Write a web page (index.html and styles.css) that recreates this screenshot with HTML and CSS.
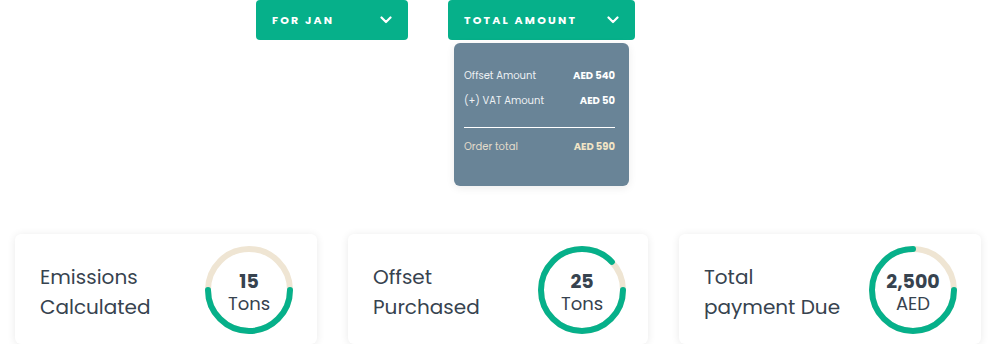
FILE: index.html
```html
<!DOCTYPE html>
<html lang="en">
<head>
    <meta charset="UTF-8">
    <meta name="viewport" content="width=device-width, initial-scale=1.0">
    <title>Emissions summary</title>
    <link rel="stylesheet" href="styles.css">
</head>
<body>
    <div class="toolbar">
        <div class="select">
            <button class="select-btn month-btn">
                <span>FOR JAN</span>
                <svg class="chevron" viewBox="0 0 12 8" width="12" height="8"><path d="M1.5 1.5 L6 6 L10.5 1.5" /></svg>
            </button>
        </div>
        <div class="select">
            <button class="select-btn amount-btn">
                <span>TOTAL AMOUNT</span>
                <svg class="chevron" viewBox="0 0 12 8" width="12" height="8"><path d="M1.5 1.5 L6 6 L10.5 1.5" /></svg>
            </button>
            <div class="dropdown">
                <div class="row">
                    <span>Offset Amount</span>
                    <b>AED 540</b>
                </div>
                <div class="row">
                    <span>(+) VAT Amount</span>
                    <b>AED 50</b>
                </div>
                <div class="divider"></div>
                <div class="row total">
                    <span>Order total</span>
                    <b>AED 590</b>
                </div>
            </div>
        </div>
    </div>

    <div class="cards">
        <div class="card">
            <div class="card-title">Emissions<br>Calculated</div>
            <div class="ring">
                <svg viewBox="0 0 88 88" width="88" height="88">
                    <circle class="track" cx="44" cy="44" r="41" />
                    <circle class="progress" cx="44" cy="44" r="41" pathLength="100" stroke-dasharray="50 100" />
                </svg>
                <div class="ring-text"><b>15</b><span>Tons</span></div>
            </div>
        </div>
        <div class="card">
            <div class="card-title">Offset<br>Purchased</div>
            <div class="ring">
                <svg viewBox="0 0 88 88" width="88" height="88">
                    <circle class="track" cx="44" cy="44" r="41" />
                    <circle class="progress" cx="44" cy="44" r="41" pathLength="100" stroke-dasharray="88 100" />
                </svg>
                <div class="ring-text"><b>25</b><span>Tons</span></div>
            </div>
        </div>
        <div class="card">
            <div class="card-title">Total<br>payment Due</div>
            <div class="ring">
                <svg viewBox="0 0 88 88" width="88" height="88">
                    <circle class="track" cx="44" cy="44" r="41" />
                    <circle class="progress" cx="44" cy="44" r="41" pathLength="100" stroke-dasharray="75 100" />
                </svg>
                <div class="ring-text"><b>2,500</b><span>AED</span></div>
            </div>
        </div>
    </div>
</body>
</html>
```

FILE: styles.css
```css
body {
    margin: 0;
    font-family: Poppins, Inter, "Noto Sans", sans-serif;
    background-color: #fff;
    color: #37434f;
}
.toolbar {
    display: flex;
    gap: 40px;
    padding-left: 256px;
    height: 40px;
}
.select {
    position: relative;
}
.select-btn {
    display: flex;
    align-items: center;
    justify-content: space-between;
    height: 40px;
    padding: 0 16px;
    border: none;
    border-radius: 4px;
    background-color: #06b08a;
    color: #fff;
    font-family: inherit;
    font-size: 11px;
    font-weight: 700;
    letter-spacing: 2.2px;
    cursor: pointer;
}
.month-btn {
    width: 152px;
}
.amount-btn {
    width: 187px;
}
.chevron {
    fill: none;
    stroke: #fff;
    stroke-width: 2.2;
    stroke-linecap: round;
    stroke-linejoin: round;
}
.dropdown {
    position: absolute;
    top: 43px;
    left: 6px;
    width: 175px;
    height: 143px;
    box-sizing: border-box;
    padding: 26px 14px 0 10px;
    background-color: #698497;
    border-radius: 6px;
    box-shadow: 0 2px 8px rgba(0, 0, 0, 0.08);
    font-size: 10px;
    color: #edf1f4;
}
.row {
    display: flex;
    justify-content: space-between;
    align-items: center;
    height: 14px;
    margin-bottom: 11px;
}
.row b {
    color: #fff;
    font-weight: 700;
}
.divider {
    height: 1px;
    background-color: #fff;
    margin: 19px 0 12px;
}
.row.total span {
    color: #e4dccb;
}
.row.total b {
    color: #f1e4c6;
}
.cards {
    display: grid;
    grid-template-columns: 302px 300px 302px;
    gap: 31px;
    margin: 194px 15px 0;
}
.card {
    display: flex;
    align-items: center;
    height: 110px;
    padding: 0 25px;
    background-color: #fff;
    border-radius: 6px;
    box-shadow: 0 1px 8px rgba(0, 0, 0, 0.09);
}
.card-title {
    flex: none;
    width: 165px;
    font-size: 20px;
    line-height: 30px;
    margin-top: 6px;
}
.ring {
    flex: none;
    position: relative;
    width: 88px;
    height: 88px;
    margin-top: 2px;
}
.ring svg {
    display: block;
}
.track {
    fill: none;
    stroke: #efe5d3;
    stroke-width: 6;
}
.progress {
    fill: none;
    stroke: #06b08a;
    stroke-width: 6;
    stroke-linecap: round;
}
.ring-text {
    position: absolute;
    inset: 0;
    display: flex;
    flex-direction: column;
    align-items: center;
    justify-content: center;
    gap: 4px;
    padding-top: 5px;
    line-height: 18px;
}
.ring-text b {
    font-size: 19px;
    font-weight: 700;
}
.ring-text span {
    font-size: 18px;
}
```
